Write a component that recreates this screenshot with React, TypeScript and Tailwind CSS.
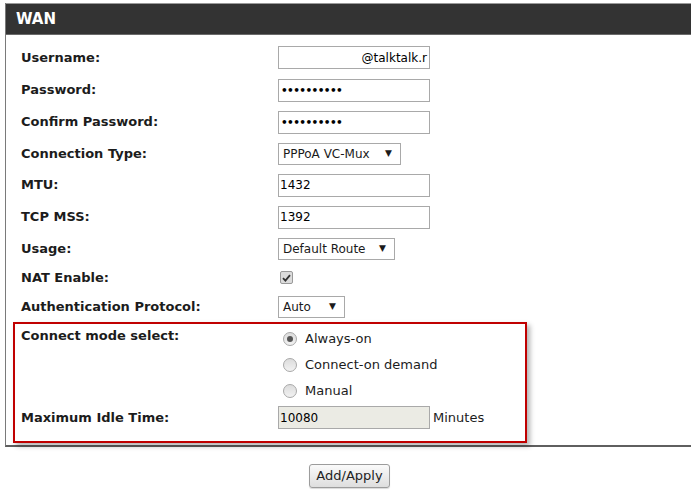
import type { ReactNode } from "react";

const FONT = "font-['DejaVu_Sans',_'Liberation_Sans',_sans-serif]";

function TextBox({
  value,
  right,
  disabled,
}: {
  value: ReactNode;
  right?: boolean;
  disabled?: boolean;
}) {
  return (
    <div
      className={`flex h-[23px] w-[152px] items-center overflow-hidden border border-[#a9a9a9] px-[1px] text-[12px] text-black ${
        right ? "justify-end pr-[2px]" : ""
      } ${disabled ? "bg-[#ebebe4]" : "bg-white"}`}
    >
      {value}
    </div>
  );
}

function Dots() {
  return (
    <span className="pl-[1px] text-[10.5px] font-bold leading-none tracking-[-0.6px]">
      ••••••••••
    </span>
  );
}

function Select({ value, width }: { value: string; width: string }) {
  return (
    <div
      className={`flex h-[22px] items-center justify-between border border-[#a9a9a9] bg-white pl-[4px] pr-[8px] text-[12px] text-[#1a1a1a] ${width}`}
    >
      <span>{value}</span>
      <span className="text-[9px]">▼</span>
    </div>
  );
}

function Radio({ checked }: { checked?: boolean }) {
  return (
    <span className="flex h-[14px] w-[14px] items-center justify-center rounded-full border border-[#a8a8a8] bg-gradient-to-b from-[#dcdcdc] to-[#f2f2f2]">
      {checked && <span className="h-[6px] w-[6px] rounded-full bg-[#555]" />}
    </span>
  );
}

function Checkbox() {
  return (
    <span className="ml-[2px] flex h-[13px] w-[13px] items-center justify-center rounded-[2px] border border-[#9a9a9a] bg-[#dcdcdc]">
      <svg width="9" height="8" viewBox="0 0 9 8">
        <path d="M1 4.2 L3.4 6.6 L8 1.2" fill="none" stroke="#333" strokeWidth="1.8" />
      </svg>
    </span>
  );
}

const ROWS: { label: string; h: string; control: ReactNode }[] = [
  { label: "Username:", h: "h-[33px]", control: <TextBox value="@talktalk.r" right /> },
  { label: "Password:", h: "h-[32px]", control: <TextBox value={<Dots />} /> },
  { label: "Confirm Password:", h: "h-[32px]", control: <TextBox value={<Dots />} /> },
  {
    label: "Connection Type:",
    h: "h-[31px]",
    control: <Select value="PPPoA VC-Mux" width="w-[123px]" />,
  },
  { label: "MTU:", h: "h-[32px]", control: <TextBox value="1432" /> },
  { label: "TCP MSS:", h: "h-[32px]", control: <TextBox value="1392" /> },
  {
    label: "Usage:",
    h: "h-[31px]",
    control: <Select value="Default Route" width="w-[117px]" />,
  },
  { label: "NAT Enable:", h: "h-[27px]", control: <Checkbox /> },
  {
    label: "Authentication Protocol:",
    h: "h-[31px]",
    control: <Select value="Auto" width="w-[67px]" />,
  },
];

const MODES = ["Always-on", "Connect-on demand", "Manual"];

export default function App() {
  return (
    <div className={`h-[490px] w-[691px] overflow-hidden bg-white ${FONT}`}>
      <div className="ml-[5px] mt-[3px] w-[700px] border-b-2 border-l border-b-[#5f5f5f] border-l-[#7a7a7a] pb-[2px]">
        <div className="flex h-[32px] items-center border-t border-b border-t-[#9a9a9a] border-b-[#6a6a6a] bg-[#333333] pl-[10px] text-[15px] font-bold text-white">
          WAN
        </div>

        <div className="pt-[6px]">
          {ROWS.map((row) => (
            <div key={row.label} className={`flex items-center ${row.h}`}>
              <div className="w-[272px] pl-[15px] text-[13px] font-bold text-[#1c1c1c]">
                {row.label}
              </div>
              {row.control}
            </div>
          ))}
        </div>

        <div className="ml-[7px] w-[514px] border-2 border-[#c00000] pb-[10px] pt-[2px] shadow-[3px_3px_5px_rgba(0,0,0,0.3)]">
          <div className="flex">
            <div className="h-[20px] w-[257px] pl-[6px] text-[13px] font-bold leading-[20px] text-[#1c1c1c]">
              Connect mode select:
            </div>
            <div className="flex flex-col">
              {MODES.map((mode, i) => (
                <div key={mode} className="flex h-[26px] items-center pl-[11px]">
                  <Radio checked={i === 0} />
                  <span className="ml-[8px] text-[13px] text-[#1c1c1c]">{mode}</span>
                </div>
              ))}
            </div>
          </div>
          <div className="flex h-[27px] items-center">
            <div className="w-[263px] pl-[6px] text-[13px] font-bold text-[#1c1c1c]">
              Maximum Idle Time:
            </div>
            <TextBox value="10080" disabled />
            <span className="ml-[3px] text-[13px] text-[#1c1c1c]">Minutes</span>
          </div>
        </div>
      </div>

      <div className="mt-[17px] flex pl-[309px]">
        <button className="h-[24px] w-[81px] rounded-[3px] border border-[#9c9c9c] bg-gradient-to-b from-[#fafafa] to-[#dedede] text-[13px] text-[#222] shadow-[0_1px_1px_rgba(0,0,0,0.15)]">
          Add/Apply
        </button>
      </div>
    </div>
  );
}
